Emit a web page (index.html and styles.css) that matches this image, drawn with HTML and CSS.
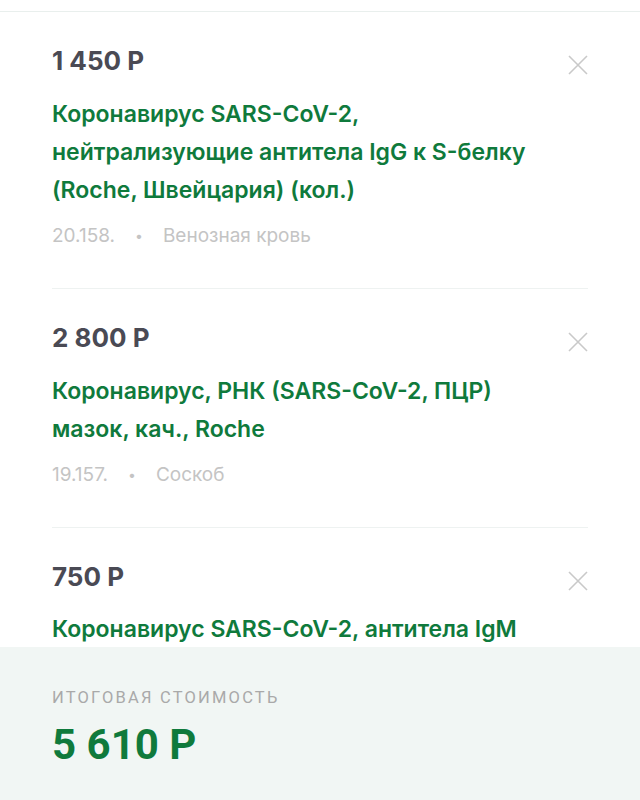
FILE: index.html
```html
<!DOCTYPE html>
<html lang="ru">
<head>
<meta charset="utf-8">
<link rel="stylesheet" href="styles.css">
</head>
<body>
<div class="page">
  <div class="list">
    <div class="item">
      <div class="item-head">
        <div class="price">1 450 Р</div>
        <button class="remove" aria-label="Удалить"><svg viewBox="0 0 20 20" width="20" height="20"><path d="M1 1L19 19M19 1L1 19" stroke="#c9c9c9" stroke-width="1.6" fill="none"/></svg></button>
      </div>
      <div class="title">Коронавирус SARS-CoV-2, нейтрализующие антитела IgG к S-белку (Roche, Швейцария) (кол.)</div>
      <div class="meta"><span>20.158.</span><span class="dot">•</span><span>Венозная кровь</span></div>
    </div>
    <div class="item">
      <div class="item-head">
        <div class="price">2 800 Р</div>
        <button class="remove" aria-label="Удалить"><svg viewBox="0 0 20 20" width="20" height="20"><path d="M1 1L19 19M19 1L1 19" stroke="#c9c9c9" stroke-width="1.6" fill="none"/></svg></button>
      </div>
      <div class="title">Коронавирус, РНК (SARS-CoV-2, ПЦР) мазок, кач., Roche</div>
      <div class="meta"><span>19.157.</span><span class="dot">•</span><span>Соскоб</span></div>
    </div>
    <div class="item item-partial">
      <div class="item-head">
        <div class="price">750 Р</div>
        <button class="remove" aria-label="Удалить"><svg viewBox="0 0 20 20" width="20" height="20"><path d="M1 1L19 19M19 1L1 19" stroke="#c9c9c9" stroke-width="1.6" fill="none"/></svg></button>
      </div>
      <div class="title">Коронавирус SARS-CoV-2, антитела IgM</div>
    </div>
  </div>
  <div class="summary">
    <div class="summary-label">Итоговая стоимость</div>
    <div class="summary-total">5 610 Р</div>
  </div>
</div>
</body>
</html>
```
FILE: styles.css
```css
html, body {
  margin: 0;
  padding: 0;
  background: #ffffff;
  font-family: Inter, "Noto Sans", sans-serif;
}
.page {
  height: 800px;
  display: flex;
  flex-direction: column;
  overflow: hidden;
}
.list {
  flex: 1;
  min-height: 0;
  overflow: hidden;
  margin-top: 11px;
  border-top: 1px solid #e9efed;
  padding: 0 52px;
}
.item {
  padding: 34px 0 39px;
  border-bottom: 1px solid #eef2f1;
}
.item-partial {
  padding-bottom: 0;
  border-bottom: 0;
}
.item-head {
  display: flex;
  justify-content: space-between;
  align-items: flex-start;
}
.price {
  font-size: 26px;
  line-height: 30px;
  font-weight: 700;
  color: #4a4a54;
}
.remove {
  border: 0;
  background: none;
  padding: 0;
  margin: 9px 0 0;
  width: 20px;
  height: 20px;
  display: block;
}
.remove svg { display: block; }
.title {
  margin-top: 19px;
  max-width: 500px;
  font-size: 23px;
  line-height: 38px;
  font-weight: 600;
  color: #0f7a3c;
}
.item-partial .title {
  line-height: 37px;
}
.meta {
  margin-top: 14px;
  font-size: 19px;
  line-height: 26px;
  color: #c4c4c4;
  display: flex;
}
.dot {
  font-size: 14px;
  margin: 0 20px;
}
.summary {
  flex: none;
  height: 153px;
  box-sizing: border-box;
  padding: 41px 52px 0;
  background: #f1f6f4;
  font-family: Roboto, "Noto Sans", sans-serif;
}
.summary-label {
  font-size: 16.5px;
  line-height: 20px;
  text-transform: uppercase;
  color: #a9a9a9;
  letter-spacing: 2.2px;
}
.summary-total {
  margin-top: 13px;
  font-size: 42px;
  line-height: 48px;
  font-weight: 700;
  color: #0f7a3c;
}
```
